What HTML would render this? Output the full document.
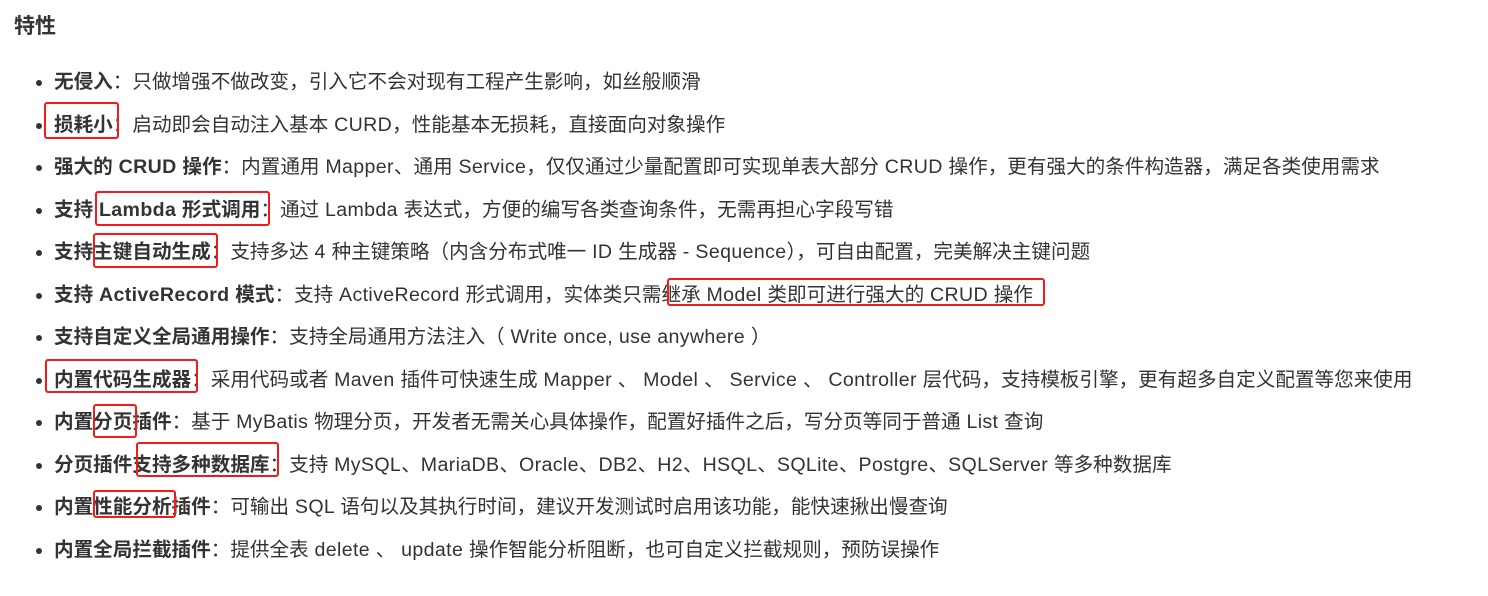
<!DOCTYPE html>
<html><head><meta charset="utf-8"><style>
body{margin:0;width:1488px;height:596px;background:#fff;font-family:"Liberation Sans","Noto Sans CJK SC",sans-serif;color:#333;position:relative;overflow:hidden}
h3{position:absolute;left:14px;top:13px;margin:0;font-size:21px;font-weight:bold;color:#333;line-height:28px}
ul{position:absolute;left:0;top:61px;margin:0;padding-left:54px;list-style:none}
li{font-size:19.6px;line-height:42.5px;height:42.5px;white-space:nowrap;position:relative}
li:before{content:"";position:absolute;left:-18px;top:19px;width:6px;height:6px;border-radius:50%;background:#333}
b{color:#333}
i{font-style:normal;letter-spacing:.35px}
.r{position:absolute;border:2px solid #f01c1c;border-radius:3px;box-sizing:border-box}
</style></head><body>
<h3>特性</h3>
<ul>
<li><b>无侵入</b>：只做增强不做改变，引入它不会对现有工程产生影响，如丝般顺滑</li>
<li><b>损耗小</b>：启动即会自动注入基本<i> CURD</i>，性能基本无损耗，直接面向对象操作</li>
<li><b>强大的<i> CRUD </i>操作</b>：内置通用<i> Mapper</i>、通用<i> Service</i>，仅仅通过少量配置即可实现单表大部分<i> CRUD </i>操作，更有强大的条件构造器，满足各类使用需求</li>
<li><b>支持<i> Lambda </i>形式调用</b>：通过<i> Lambda </i>表达式，方便的编写各类查询条件，无需再担心字段写错</li>
<li><b>支持主键自动生成</b>：支持多达<i> 4 </i>种主键策略（内含分布式唯一<i> ID </i>生成器<i> - Sequence</i>），可自由配置，完美解决主键问题</li>
<li><b>支持<i> ActiveRecord </i>模式</b>：支持<i> ActiveRecord </i>形式调用，实体类只需继承<i> Model </i>类即可进行强大的<i> CRUD </i>操作</li>
<li><b>支持自定义全局通用操作</b>：支持全局通用方法注入（<i> Write once, use anywhere </i>）</li>
<li><b>内置代码生成器</b>：采用代码或者<i> Maven </i>插件可快速生成<i> Mapper </i>、<i> Model </i>、<i> Service </i>、<i> Controller </i>层代码，支持模板引擎，更有超多自定义配置等您来使用</li>
<li><b>内置分页插件</b>：基于<i> MyBatis </i>物理分页，开发者无需关心具体操作，配置好插件之后，写分页等同于普通<i> List </i>查询</li>
<li><b>分页插件支持多种数据库</b>：支持<i> MySQL</i>、<i>MariaDB</i>、<i>Oracle</i>、<i>DB2</i>、<i>H2</i>、<i>HSQL</i>、<i>SQLite</i>、<i>Postgre</i>、<i>SQLServer </i>等多种数据库</li>
<li><b>内置性能分析插件</b>：可输出<i> SQL </i>语句以及其执行时间，建议开发测试时启用该功能，能快速揪出慢查询</li>
<li><b>内置全局拦截插件</b>：提供全表<i> delete </i>、<i> update </i>操作智能分析阻断，也可自定义拦截规则，预防误操作</li>
</ul>
<div class="r" style="left:44px;top:102px;width:75px;height:37px"></div>
<div class="r" style="left:95px;top:191px;width:175px;height:35px"></div>
<div class="r" style="left:93px;top:233px;width:125px;height:35px"></div>
<div class="r" style="left:667px;top:278px;width:378px;height:28px"></div>
<div class="r" style="left:45px;top:359px;width:153px;height:34px"></div>
<div class="r" style="left:93px;top:404px;width:44px;height:34px"></div>
<div class="r" style="left:136px;top:442px;width:143px;height:35px"></div>
<div class="r" style="left:93px;top:490px;width:83px;height:28px"></div>
</body></html>
